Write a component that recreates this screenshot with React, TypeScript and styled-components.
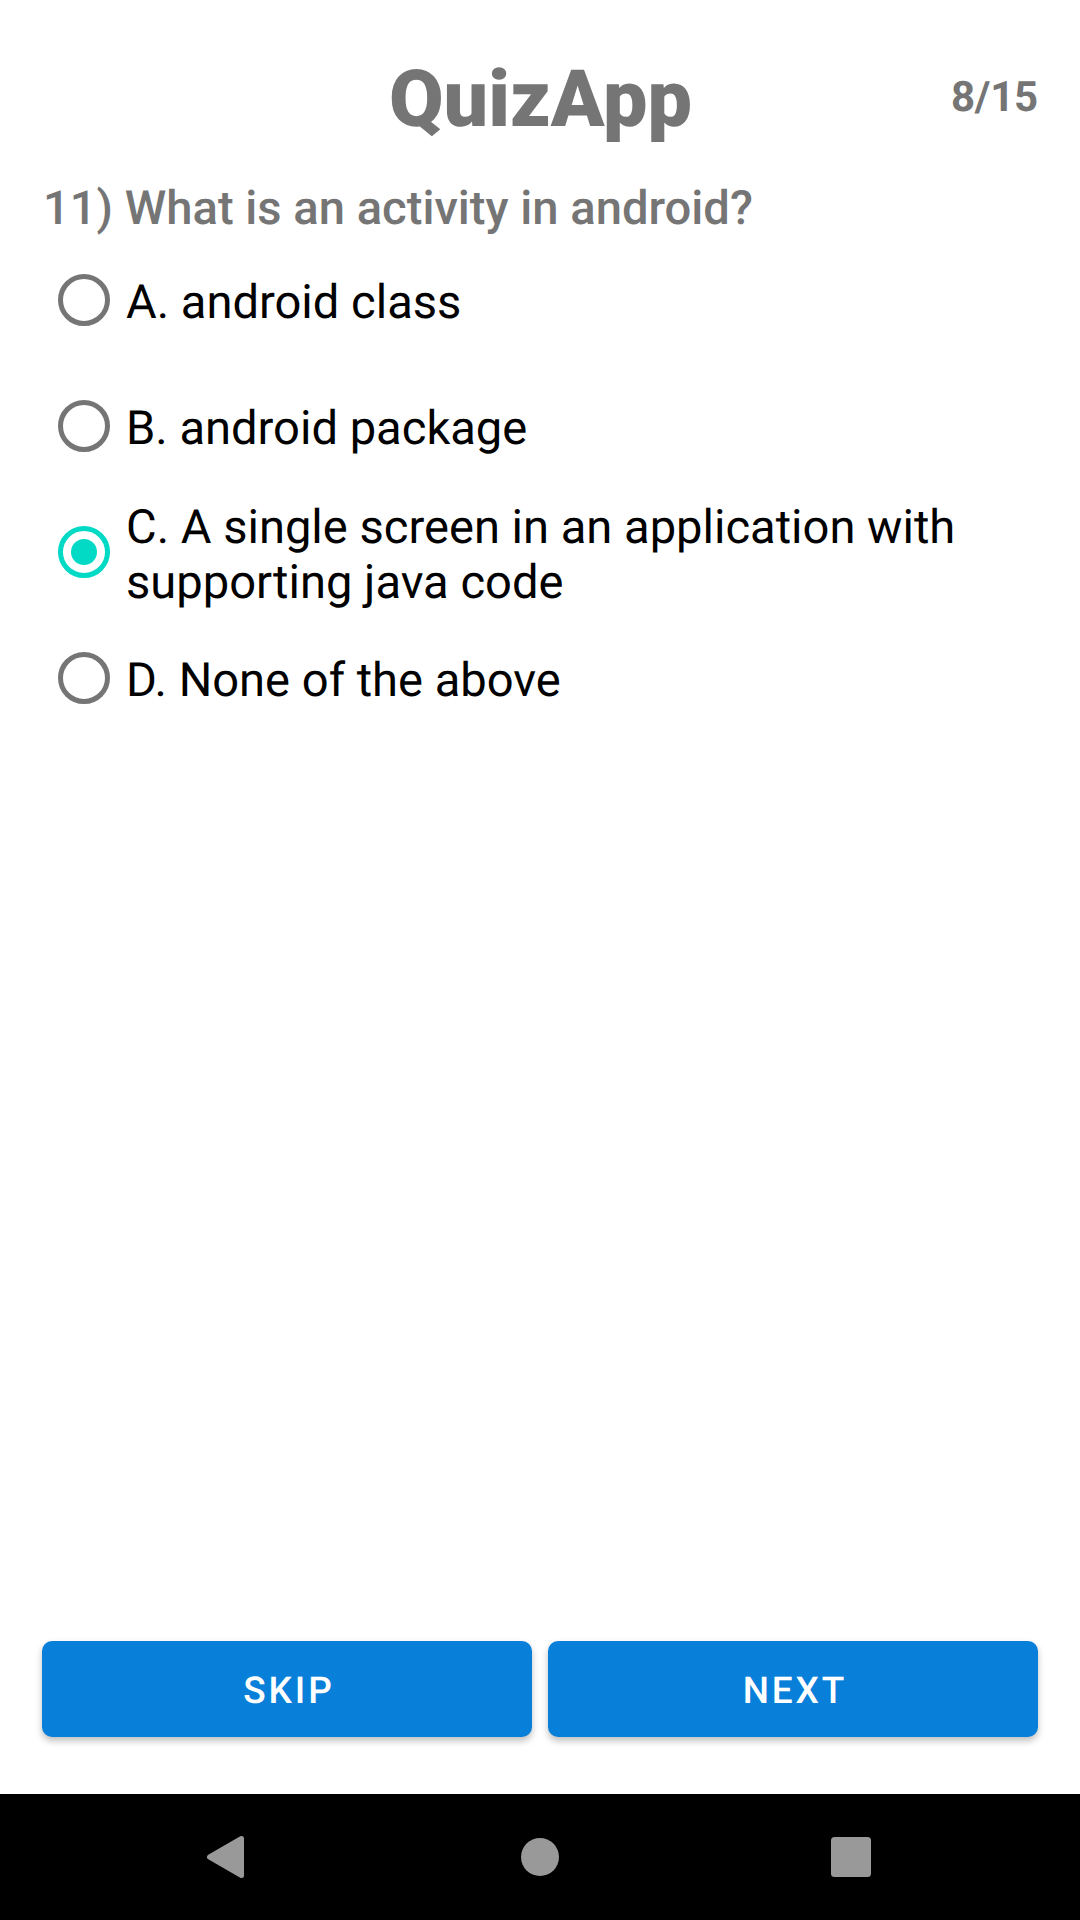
import React, { useState } from "react";
import styled, { createGlobalStyle } from "styled-components";

const Global = createGlobalStyle`
  * { box-sizing: border-box; }
  body {
    margin: 0;
    background: #fff;
    font-family: Roboto, sans-serif;
    text-rendering: geometricPrecision;
  }
`;

const Screen = styled.div`
  width: 1080px;
  height: 1920px;
  display: flex;
  flex-direction: column;
  background: #fff;
  overflow: hidden;
`;

const Header = styled.header`
  display: grid;
  grid-template-columns: 1fr auto 1fr;
  align-items: center;
  height: 112px;
  margin-top: 42px;
  padding: 0 42px;
  color: #757575;
`;

const Title = styled.h1`
  grid-column: 2;
  margin: 0;
  padding: 4px 0 0 1px;
  font-size: 79px;
  font-weight: 900;
  line-height: 108px;
  letter-spacing: 0.1px;
`;

const Counter = styled.span`
  justify-self: end;
  font-size: 42px;
  font-weight: 700;
  line-height: 50px;
  letter-spacing: -0.2px;
`;

const Question = styled.h2`
  margin: 26px 42px 0 43px;
  height: 56px;
  line-height: 56px;
  font-size: 47.15px;
  font-weight: 500;
  color: #757575;
`;

const Options = styled.div`
  flex: 1;
  padding: 0 42px;
  margin-top: 1px;
`;

const Option = styled.button`
  display: flex;
  align-items: center;
  width: 100%;
  height: 126px;
  padding: 0;
  border: 0;
  background: none;
  text-align: left;
  font: 400 47.1px/55px Roboto, sans-serif;
  text-rendering: inherit;
  color: #000;
`;

const Radio = styled.span<{ $on: boolean }>`
  flex: none;
  display: flex;
  align-items: center;
  justify-content: center;
  width: 52px;
  height: 52px;
  margin: 0 16px;
  border: 5px solid ${(p) => (p.$on ? "#03dac5" : "#757575")};
  border-radius: 50%;

  &::after {
    content: "";
    width: 26px;
    height: 26px;
    border-radius: 50%;
    background: ${(p) => (p.$on ? "#03dac5" : "transparent")};
  }
`;

const Label = styled.span`
  white-space: pre-line;
  padding-top: 5px;
`;

const Actions = styled.div`
  display: flex;
  gap: 16px;
  padding: 0 42px;
  margin-bottom: 57px;
`;

const Action = styled.button`
  flex: 1;
  height: 96px;
  padding: 6px 0 0 4px;
  border: 0;
  border-radius: 10px;
  background: #0880da;
  color: #fff;
  font: 500 37px/44px Roboto, sans-serif;
  text-rendering: inherit;
  letter-spacing: 2.9px;
  box-shadow: 0 4px 7px rgba(0, 0, 0, 0.25);
`;

const NavBar = styled.nav`
  display: block;
  height: 126px;
  background: #000;
`;

const choices = [
  "A. android class",
  "B. android package",
  "C. A single screen in an application with\nsupporting java code",
  "D. None of the above",
];

export default function App() {
  const [selected, setSelected] = useState(2);
  return (
    <Screen>
      <Global />
      <Header>
        <Title>QuizApp</Title>
        <Counter>8/15</Counter>
      </Header>
      <Question>11) What is an activity in android?</Question>
      <Options role="radiogroup">
        {choices.map((text, i) => (
          <Option key={text} role="radio" aria-checked={i === selected} onClick={() => setSelected(i)}>
            <Radio $on={i === selected} />
            <Label>{text}</Label>
          </Option>
        ))}
      </Options>
      <Actions>
        <Action>SKIP</Action>
        <Action>NEXT</Action>
      </Actions>
      <NavBar>
        <svg width="1080" height="126" fill="#999">
          <path
            d="M209.5 63 L241.5 44.5 V81.5 Z"
            stroke="#999"
            strokeWidth="5"
            strokeLinejoin="round"
          />
          <circle cx="540" cy="63" r="19" />
          <rect x="831" y="43" width="40" height="40" rx="3.5" />
        </svg>
      </NavBar>
    </Screen>
  );
}
